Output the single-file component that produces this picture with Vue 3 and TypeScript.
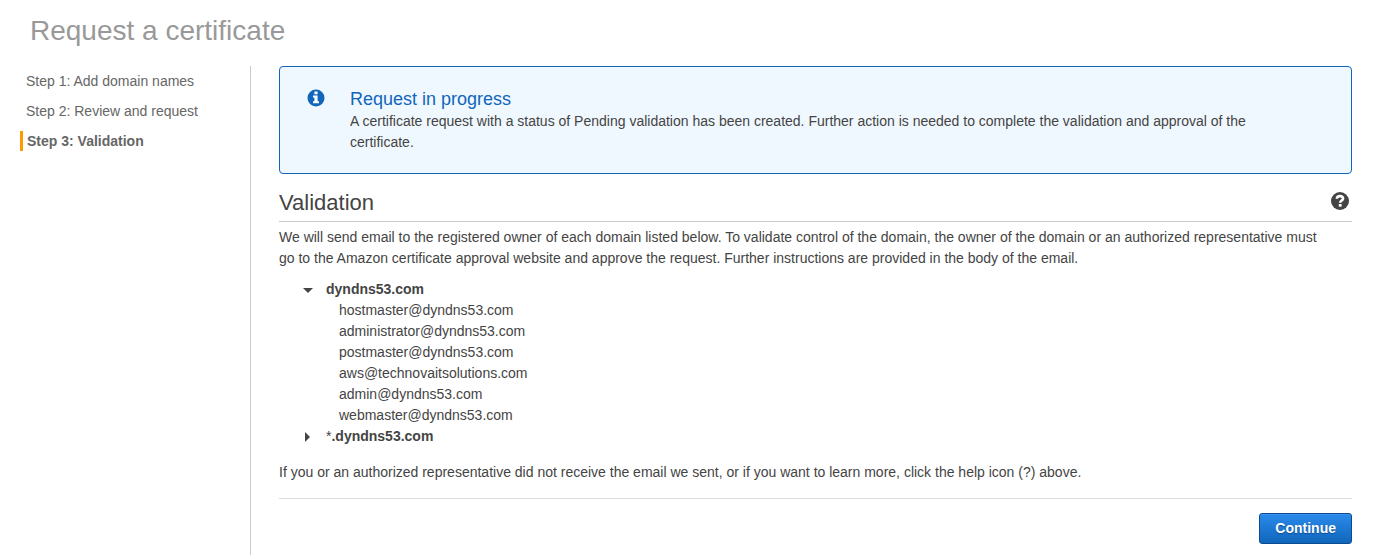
<script setup lang="ts">
import { ref } from 'vue'

interface Step {
  label: string
}

interface Domain {
  name: string
  wildcard: boolean
  open: boolean
  emails: string[]
}

const steps: Step[] = [
  { label: 'Step 1: Add domain names' },
  { label: 'Step 2: Review and request' },
  { label: 'Step 3: Validation' },
]
const currentStep = 2

const recipients = (host: string): string[] => [
  `hostmaster@${host}`,
  `administrator@${host}`,
  `postmaster@${host}`,
  'aws@technovaitsolutions.com',
  `admin@${host}`,
  `webmaster@${host}`,
]

const domains = ref<Domain[]>([
  { name: 'dyndns53.com', wildcard: false, open: true, emails: recipients('dyndns53.com') },
  { name: '.dyndns53.com', wildcard: true, open: false, emails: recipients('dyndns53.com') },
])
</script>

<template>
  <div class="page">
    <h1 class="page-title">Request a certificate</h1>
    <div class="layout">
      <nav class="steps" aria-label="Steps">
        <ol>
          <li v-for="(step, i) in steps" :key="step.label">
            <a
              href="#"
              class="step"
              :class="{ current: i === currentStep }"
              :aria-current="i === currentStep ? 'step' : undefined"
              @click.prevent
            >{{ step.label }}</a>
          </li>
        </ol>
      </nav>

      <main class="content">
        <section class="notice" role="status">
          <svg class="notice-icon" viewBox="0 0 18 18" aria-hidden="true">
            <circle cx="9" cy="9" r="8.5" fill="#1166bb" />
            <path fill="#fff" d="M7.4 2.4h3.2v2.8H7.4zM6 6.6h4.6v5.6H12v2H6v-2h1.4V8.6H6z" />
          </svg>
          <div class="notice-body">
            <h2>Request in progress</h2>
            <p>
              A certificate request with a status of Pending validation has been created. Further action is
              needed to complete the validation and approval of the certificate.
            </p>
          </div>
        </section>

        <header class="section-head">
          <h2>Validation</h2>
          <button type="button" class="help" aria-label="Help">
            <svg viewBox="0 0 18 18" aria-hidden="true">
              <circle cx="9" cy="9" r="9" fill="#444" />
              <path
                d="M5.8 6.8C5.9 5 7.2 4.1 9 4.1c1.9 0 3.1.9 3.1 2.4 0 2.1-2.9 2-2.9 4.2"
                fill="none"
                stroke="#fff"
                stroke-width="2.6"
              />
              <path fill="#fff" d="M7.8 12h2.8v2.7H7.8z" />
            </svg>
          </button>
        </header>

        <p class="text">
          We will send email to the registered owner of each domain listed below. To validate control of the
          domain, the owner of the domain or an authorized representative must go to the Amazon certificate
          approval website and approve the request. Further instructions are provided in the body of the email.
        </p>

        <ul class="domains">
          <li v-for="domain in domains" :key="domain.name">
            <button
              type="button"
              class="domain"
              :aria-expanded="domain.open"
              @click="domain.open = !domain.open"
            >
              <svg class="caret" viewBox="0 0 10 10" aria-hidden="true">
                <path v-if="domain.open" d="M0 3h10L5 8z" fill="#444" />
                <path v-else d="M2 0v10l5-5z" fill="#444" />
              </svg>
              <span><span v-if="domain.wildcard" class="wildcard">*</span>{{ domain.name }}</span>
            </button>
            <ul v-if="domain.open" class="emails">
              <li v-for="email in domain.emails" :key="email">{{ email }}</li>
            </ul>
          </li>
        </ul>

        <p class="text">
          If you or an authorized representative did not receive the email we sent, or if you want to learn
          more, click the help icon (?) above.
        </p>

        <footer class="actions">
          <button type="button" class="primary">Continue</button>
        </footer>
      </main>
    </div>
  </div>
</template>

<style>
body {
  background: #fff;
}
</style>

<style scoped>
.page {
  box-sizing: border-box;
  display: flex;
  flex-direction: column;
  min-height: 100vh;
  font-family: Arial, "Liberation Sans", sans-serif;
  font-size: 14px;
  line-height: 21px;
  color: #444;
}

h1,
h2,
p,
ul,
ol {
  margin: 0;
  padding: 0;
  font-weight: normal;
}

ul,
ol {
  list-style: none;
}

button {
  font: inherit;
  color: inherit;
  cursor: pointer;
}

.page-title {
  padding: 15px 30px 19px;
  font-size: 28px;
  line-height: 32px;
  color: #999;
}

.layout {
  display: flex;
  flex: 1;
}

.steps {
  flex: none;
  box-sizing: border-box;
  width: 251px;
  padding: 5px 20px 0;
  border-right: 1px solid #ccc;
}

.steps ol {
  display: flex;
  flex-direction: column;
  gap: 10px;
}

.step {
  display: block;
  padding-left: 6px;
  line-height: 20px;
  color: #666;
  text-decoration: none;
}

.step.current {
  padding-left: 4px;
  border-left: 3px solid #f90;
  font-weight: bold;
}

.content {
  flex: 1;
  min-width: 0;
  padding: 0 26px 11px 28px;
}

.notice {
  display: flex;
  gap: 25px;
  padding: 21px 27px 20px;
  border: 1px solid #1166bb;
  border-radius: 4px;
  background: #f0f8ff;
}

.notice-icon {
  flex: none;
  width: 18px;
  height: 18px;
  margin-top: 1px;
}

.notice-body {
  max-width: 940px;
}

.notice h2 {
  margin-bottom: 1px;
  font-size: 18px;
  line-height: 22px;
  color: #1166bb;
}

.section-head {
  display: flex;
  align-items: flex-start;
  justify-content: space-between;
  margin-top: 15px;
  padding: 0 3px 4px 0;
  border-bottom: 1px solid #ccc;
}

.section-head h2 {
  font-size: 22px;
  line-height: 28px;
}

.help {
  margin-top: 3px;
  padding: 0;
  border: 0;
  background: none;
}

.help svg {
  display: block;
  width: 18px;
  height: 18px;
}

.text {
  margin-top: 5px;
  padding-right: 24px;
}

.domains {
  margin: 10px 0 15px;
  padding-left: 24px;
}

.domain {
  display: flex;
  align-items: center;
  gap: 13px;
  padding: 0;
  border: 0;
  background: none;
  font-weight: bold;
}

.wildcard {
  font-weight: normal;
}

.caret {
  width: 10px;
  height: 10px;
}

.emails {
  padding-left: 36px;
}

.actions {
  display: flex;
  justify-content: flex-end;
  margin-top: 15px;
  padding-top: 14px;
  border-top: 1px solid #ddd;
}

.primary {
  padding: 4px 15px;
  border: 1px solid #0b4a8f;
  border-radius: 3px;
  background: linear-gradient(#2a8aea, #1166bb);
  box-shadow: inset 0 1px 0 #3b92ea;
  color: #fff;
  font-weight: bold;
  text-shadow: 0 1px 1px #0b4a8f;
}
</style>
